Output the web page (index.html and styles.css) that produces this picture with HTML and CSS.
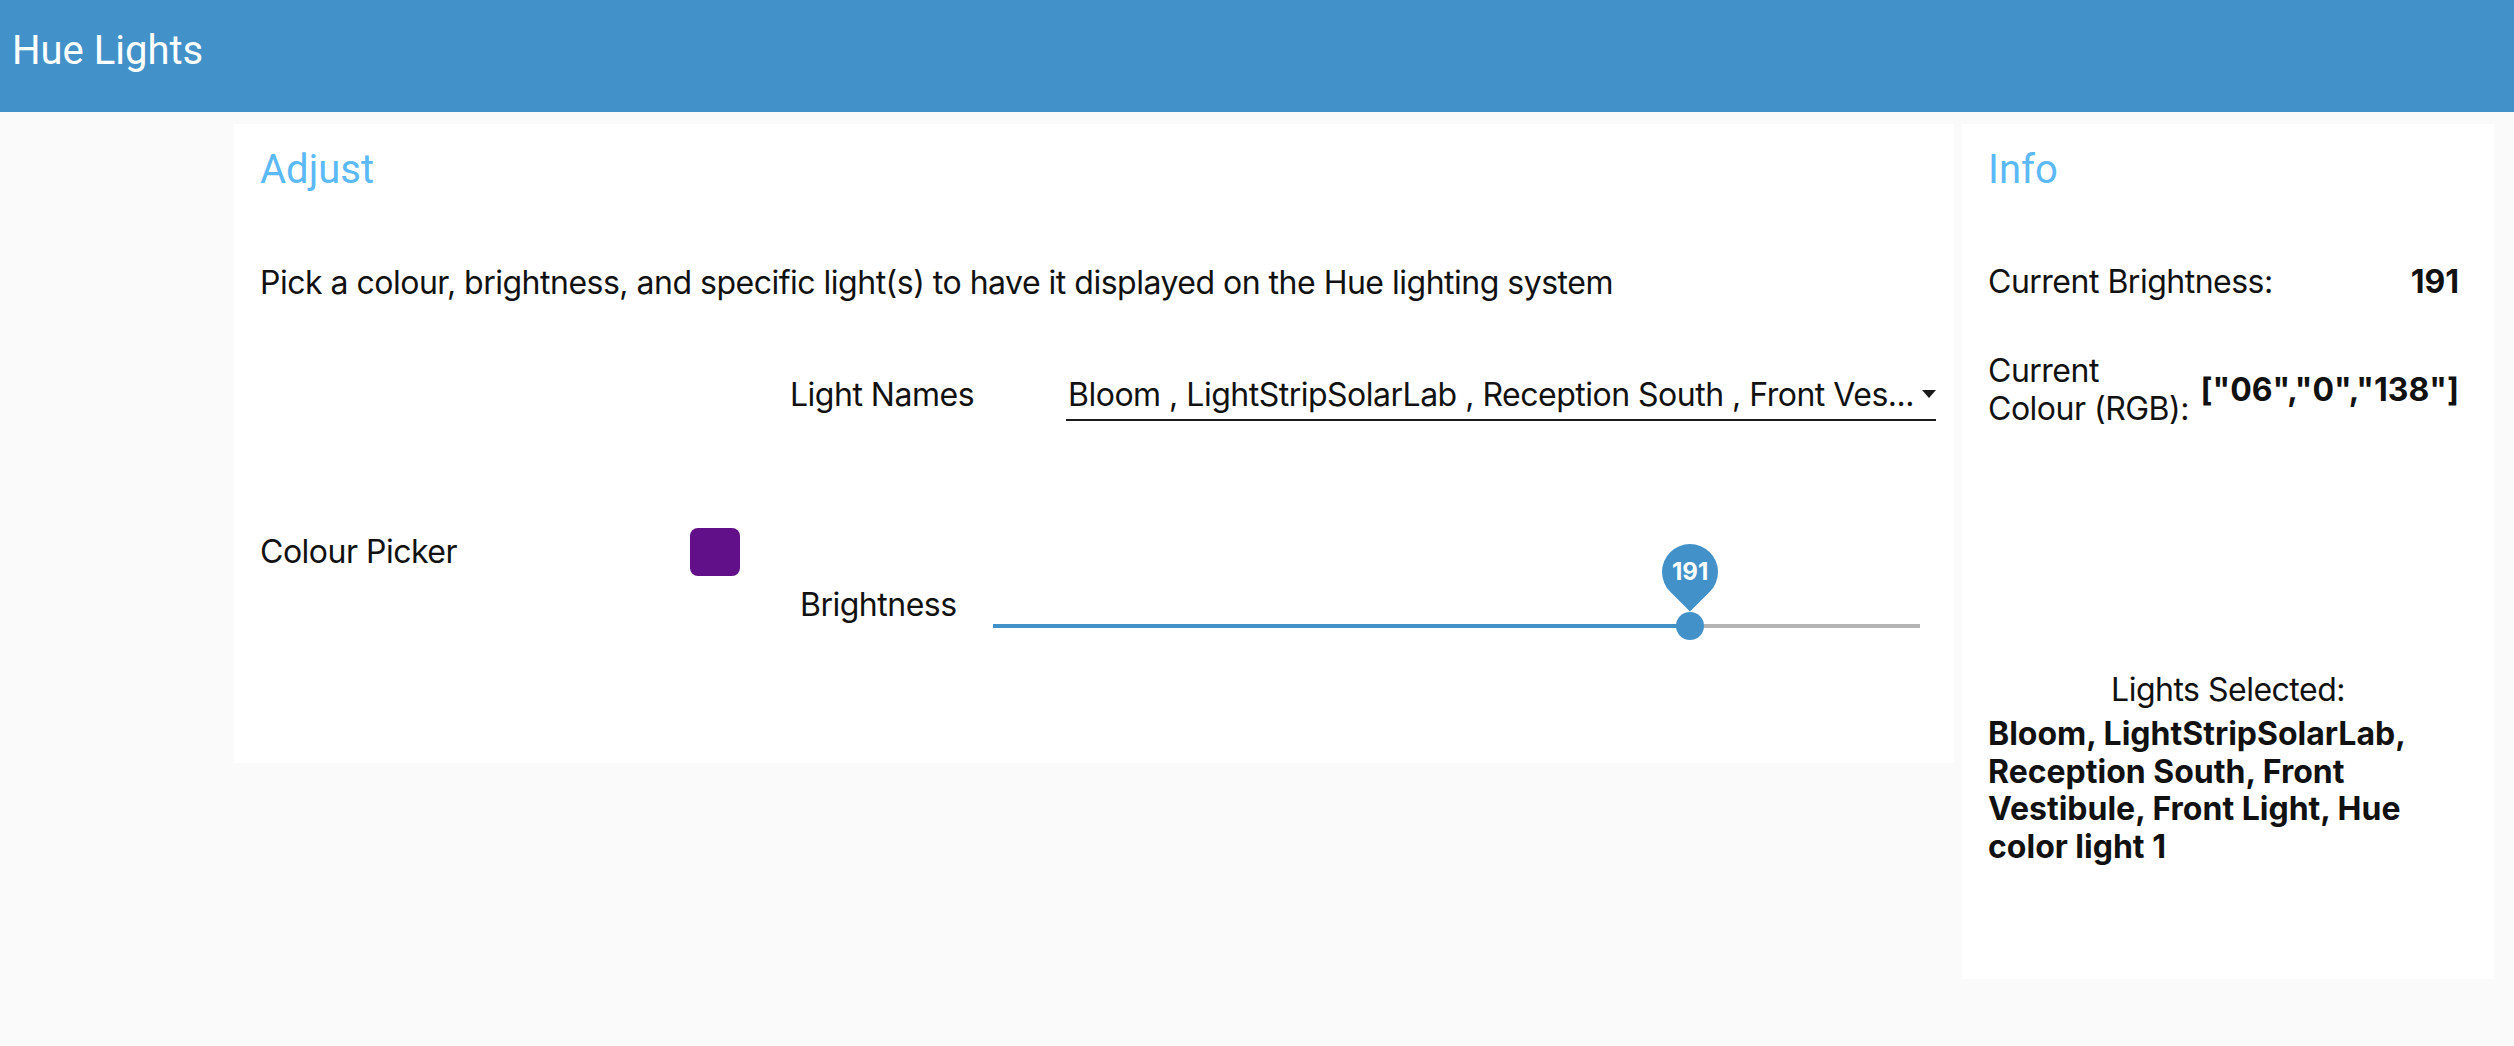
FILE: index.html
```html
<!DOCTYPE html>
<html lang="en">
<head>
<meta charset="utf-8">
<title>Hue Lights</title>
<link rel="stylesheet" href="styles.css">
</head>
<body>
<header class="appbar">
  <h1 class="appbar-title">Hue Lights</h1>
</header>
<main class="layout">
  <section class="card adjust">
    <h2 class="card-title">Adjust</h2>
    <p class="intro">Pick a colour, brightness, and specific light(s) to have it displayed on the Hue lighting system</p>
    <div class="names-row">
      <span class="names-label">Light Names</span>
      <div class="select">
        <span class="select-value">Bloom , LightStripSolarLab , Reception South , Front Ves...</span>
        <span class="select-arrow"></span>
      </div>
    </div>
    <div class="controls-row">
      <div class="picker">
        <span class="picker-label">Colour Picker</span>
        <span class="swatch"></span>
      </div>
      <div class="bright">
        <span class="bright-label">Brightness</span>
        <div class="slider">
          <div class="rail"></div>
          <div class="fill" style="width: 75.2%"></div>
          <div class="thumb" style="left: 75.2%">
            <div class="bubble"><span class="bubble-text">191</span></div>
          </div>
        </div>
      </div>
    </div>
  </section>
  <aside class="card info">
    <h2 class="card-title">Info</h2>
    <div class="info-row first">
      <span class="info-label">Current Brightness:</span>
      <span class="info-value">191</span>
    </div>
    <div class="info-row colour">
      <span class="info-label">Current<br>Colour (RGB):</span>
      <span class="info-value">["06","0","138"]</span>
    </div>
    <div class="selected-label">Lights Selected:</div>
    <div class="selected-list">Bloom, LightStripSolarLab, Reception South, Front Vestibule, Front Light, Hue color light 1</div>
  </aside>
</main>
</body>
</html>
```
FILE: styles.css
```css
html, body {
  margin: 0;
  padding: 0;
}
body {
  background: #fafafa;
  font-family: Inter, "Noto Sans", sans-serif;
  color: #111;
  font-size: 32px;
  line-height: 38px;
  letter-spacing: -0.5px;
}
.appbar {
  height: 112px;
  box-sizing: border-box;
  background: #4292c9;
  padding: 27px 0 0 12px;
}
.appbar-title {
  margin: 0;
  font-family: Roboto, "Liberation Sans", sans-serif;
  font-weight: 400;
  font-size: 40px;
  line-height: 47px;
  letter-spacing: 0;
  color: #fff;
}
.layout {
  display: grid;
  grid-template-columns: 1720px 532px;
  column-gap: 8px;
  align-items: start;
  padding: 12px 20px 0 234px;
}
.card {
  background: #fff;
  box-sizing: border-box;
  padding: 22px 26px 0 26px;
}
.card-title {
  margin: 0;
  font-family: Roboto, "Liberation Sans", sans-serif;
  font-weight: 400;
  font-size: 40px;
  line-height: 48px;
  letter-spacing: 0;
  color: #5ab9f6;
}
.adjust {
  padding-right: 18px;
  padding-bottom: 123px;
}
.intro {
  margin: 70px 0 0 0;
}
.names-row {
  display: flex;
  align-items: flex-start;
  margin-top: 74px;
  padding-left: 530px;
}
.names-label {
  width: 276px;
  flex: none;
}
.select {
  position: relative;
  flex: none;
  width: 870px;
  box-sizing: border-box;
  padding: 0 16px 5px 2px;
  border-bottom: 2px solid #1a1a1a;
}
.select-value {
  display: block;
  white-space: nowrap;
}
.select-arrow {
  position: absolute;
  right: 0;
  top: 14px;
  width: 0;
  height: 0;
  border-left: 7px solid transparent;
  border-right: 7px solid transparent;
  border-top: 8px solid #1a1a1a;
}
.controls-row {
  display: flex;
  align-items: flex-start;
  margin-top: 107px;
}
.picker {
  width: 480px;
  height: 48px;
  display: flex;
  justify-content: space-between;
  align-items: center;
  flex: none;
}
.swatch {
  width: 50px;
  height: 48px;
  border-radius: 8px;
  background: #62108a;
}
.bright {
  display: flex;
  align-items: flex-start;
  margin-left: 60px;
}
.bright-label {
  width: 193px;
  flex: none;
  margin-top: 58px;
}
.slider {
  position: relative;
  flex: none;
  width: 927px;
  height: 28px;
  margin-top: 84px;
}
.rail, .fill {
  position: absolute;
  left: 0;
  top: 12px;
  height: 4px;
}
.rail {
  right: 0;
  background: #b4b4b4;
}
.fill {
  background: #4292c9;
}
.thumb {
  position: absolute;
  top: 0;
  width: 28px;
  height: 28px;
  margin-left: -14px;
  border-radius: 50%;
  background: #4292c9;
}
.bubble {
  position: absolute;
  left: -14px;
  top: -68px;
  width: 56px;
  height: 56px;
  border-radius: 50% 50% 50% 0;
  background: #4292c9;
  transform: rotate(-45deg);
  display: flex;
  align-items: center;
  justify-content: center;
}
.bubble-text {
  transform: rotate(45deg);
  color: #fff;
  font-weight: 700;
  font-size: 24px;
  line-height: 24px;
  letter-spacing: 0;
}
.info {
  padding-bottom: 113px;
}
.info-row {
  display: flex;
  justify-content: space-between;
  align-items: center;
  padding-right: 9px;
}
.info-row.first {
  margin-top: 69px;
}
.info-row.colour {
  margin-top: 51px;
}
.info-value {
  font-weight: 700;
  letter-spacing: 0;
}
.selected-label {
  margin-top: 243px;
  text-align: center;
}
.selected-list {
  margin-top: 6px;
  font-weight: 700;
  letter-spacing: 0;
  line-height: 37.7px;
}
```
